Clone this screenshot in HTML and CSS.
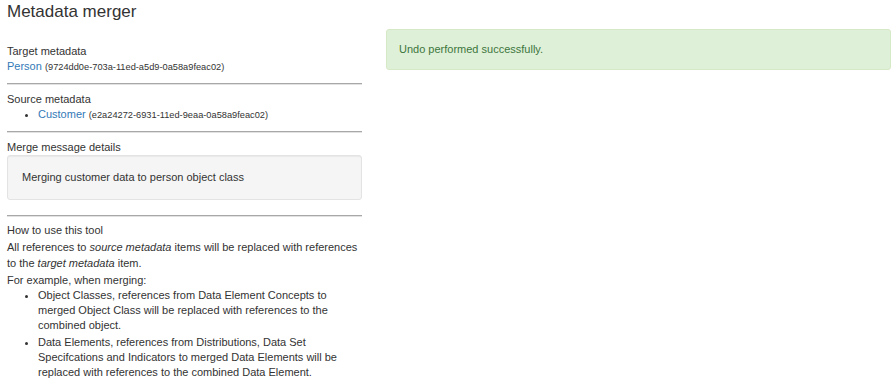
FILE: index.html
```html
<!DOCTYPE html>
<html lang="en">
<head>
    <meta charset="UTF-8">
    <title>Metadata merger</title>
    <link rel="stylesheet" href="styles.css">
</head>
<body>
<h1 class="page-title">Metadata merger</h1>
<div class="layout">
    <div class="merge-form">
        <div class="section">
            <div class="section-label">Target metadata</div>
            <div><a href="#">Person</a> <small class="uuid">(9724dd0e-703a-11ed-a5d9-0a58a9feac02)</small></div>
        </div>
        <hr>
        <div class="section">
            <div class="section-label">Source metadata</div>
            <ul class="item-list">
                <li><a href="#">Customer</a> <small class="uuid">(e2a24272-6931-11ed-9eaa-0a58a9feac02)</small></li>
            </ul>
        </div>
        <hr>
        <div class="section">
            <div class="section-label">Merge message details</div>
            <div class="well">Merging customer data to person object class</div>
        </div>
        <hr class="last">
        <div class="help">
            <div>How to use this tool</div>
            <p>All references to <em>source metadata</em> items will be replaced with references to the <em>target metadata</em> item.</p>
            <p>For example, when merging:</p>
            <ul class="help-list">
                <li>Object Classes, references from Data Element Concepts to merged Object Class will be replaced with references to the combined object.</li>
                <li>Data Elements, references from Distributions, Data Set Specifcations and Indicators to merged Data Elements will be replaced with references to the combined Data Element.</li>
            </ul>
        </div>
    </div>
    <div class="messages">
        <div class="alert">Undo performed successfully.</div>
    </div>
</div>
</body>
</html>
```

FILE: styles.css
```css
body {
    margin: 0;
    font-family: "Liberation Sans", Arial, sans-serif;
    font-size: 11px;
    line-height: 15px;
    color: #333;
    background: #fff;
}
a {
    color: #337ab7;
    text-decoration: none;
}
.page-title {
    margin: 0;
    padding: 2px 7px 0;
    font-size: 17px;
    font-weight: normal;
    line-height: 20px;
}
.layout {
    display: grid;
    grid-template-columns: 355px 505px;
    column-gap: 24px;
    padding: 0 5px 0 7px;
}
.merge-form {
    padding-top: 22px;
}
.uuid {
    font-size: 9.25px;
}
hr {
    border: 0;
    border-top: 1px solid #a8a8a8;
    border-bottom: 1px solid #e2e2e2;
    margin: 8px 0 7px;
}
.item-list {
    margin: 0;
    padding-left: 31px;
}
.well {
    padding: 14px 14px;
    background: #f5f5f5;
    border: 1px solid #e3e3e3;
    border-radius: 3px;
    box-shadow: inset 0 1px 1px rgba(0,0,0,.05);
}
hr.last {
    margin: 15px 0 5px;
}
.help {
    line-height: 16.5px;
}
.help p {
    margin: 0;
}
.help-list {
    margin: 0;
    padding-left: 31px;
    line-height: 15px;
}
.help-list li {
    margin-bottom: 2px;
}
.messages {
    padding-top: 7px;
}
.alert {
    padding: 12px 12px;
    color: #3c763d;
    background: #dff0d8;
    border: 1px solid #d6e9c6;
    border-radius: 3px;
}
```
